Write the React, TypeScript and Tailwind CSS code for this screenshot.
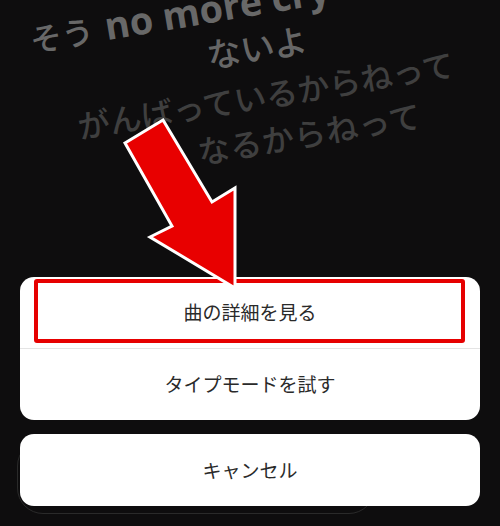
const jp = { fontFamily: '"Noto Sans CJK JP", "Noto Sans", sans-serif' };
const latin = { fontFamily: '"Open Sans", "Noto Sans CJK JP", sans-serif' };

const lyricLines = [
  { text: "ないよ", cls: "ml-[172px] text-[#666666] font-medium text-[34px]" },
  { text: "がんばっているからねって", cls: "ml-[33px] mt-[4px] text-[#3f3f3f] font-medium text-[32px]" },
  { text: "なるからねって", cls: "ml-[147px] mt-[1px] text-[#3f3f3f] font-medium text-[32px] tracking-[0.5px]" },
];

function Arrow() {
  return (
    <svg className="absolute left-0 top-0 pointer-events-none" width="500" height="526" viewBox="0 0 500 526">
      <polygon
        points="163,120 212,202 235,188 235,288 150,237 172,226 125,143"
        fill="#e80000"
        stroke="#ffffff"
        strokeWidth="3"
        strokeLinejoin="miter"
      />
    </svg>
  );
}

export default function App() {
  return (
    <div className="relative w-[500px] h-[526px] overflow-hidden bg-[#0e0d0e] flex flex-col justify-end px-[20px] pb-[20px]" style={jp}>
      {/* lyrics behind the sheet */}
      <div className="absolute left-[30px] top-[18px] origin-[0_22px] rotate-[-9.5deg] flex flex-col whitespace-nowrap">
        <div className="h-[44px] flex items-baseline pt-[1px] leading-none text-[#686868] font-bold">
          <span className="text-[32px] font-medium">そう</span>
          <span className="text-[38px] ml-[12px]" style={latin}>no more cry</span>
        </div>
        {lyricLines.map((l) => (
          <div key={l.text} className={`h-[44px] flex items-center leading-none ${l.cls}`}>
            {l.text}
          </div>
        ))}
      </div>

      {/* faint pill outline peeking under cancel */}
      <div className="absolute left-[17px] w-[358px] top-[440px] h-[74px] rounded-[26px] border border-[#2a2a2a]" />

      <div className="relative bg-white rounded-[14px] flex flex-col">
        <div className="relative h-[71px] flex items-center justify-center text-[19px] text-[#2a2a2a]">
          曲の詳細を見る
          <div className="absolute left-[14px] right-[15px] top-[2px] bottom-[5px] border-[4px] border-[#e60000] rounded-[3px]" />
        </div>
        <div className="h-px bg-[#e4e4e4]" />
        <div className="h-[71px] flex items-center justify-center text-[19px] text-[#2a2a2a]">タイプモードを試す</div>
      </div>

      <div className="relative mt-[14px] h-[72px] bg-white rounded-[14px] flex items-center justify-center text-[19px] text-[#2a2a2a]">
        キャンセル
      </div>

      <Arrow />
    </div>
  );
}
